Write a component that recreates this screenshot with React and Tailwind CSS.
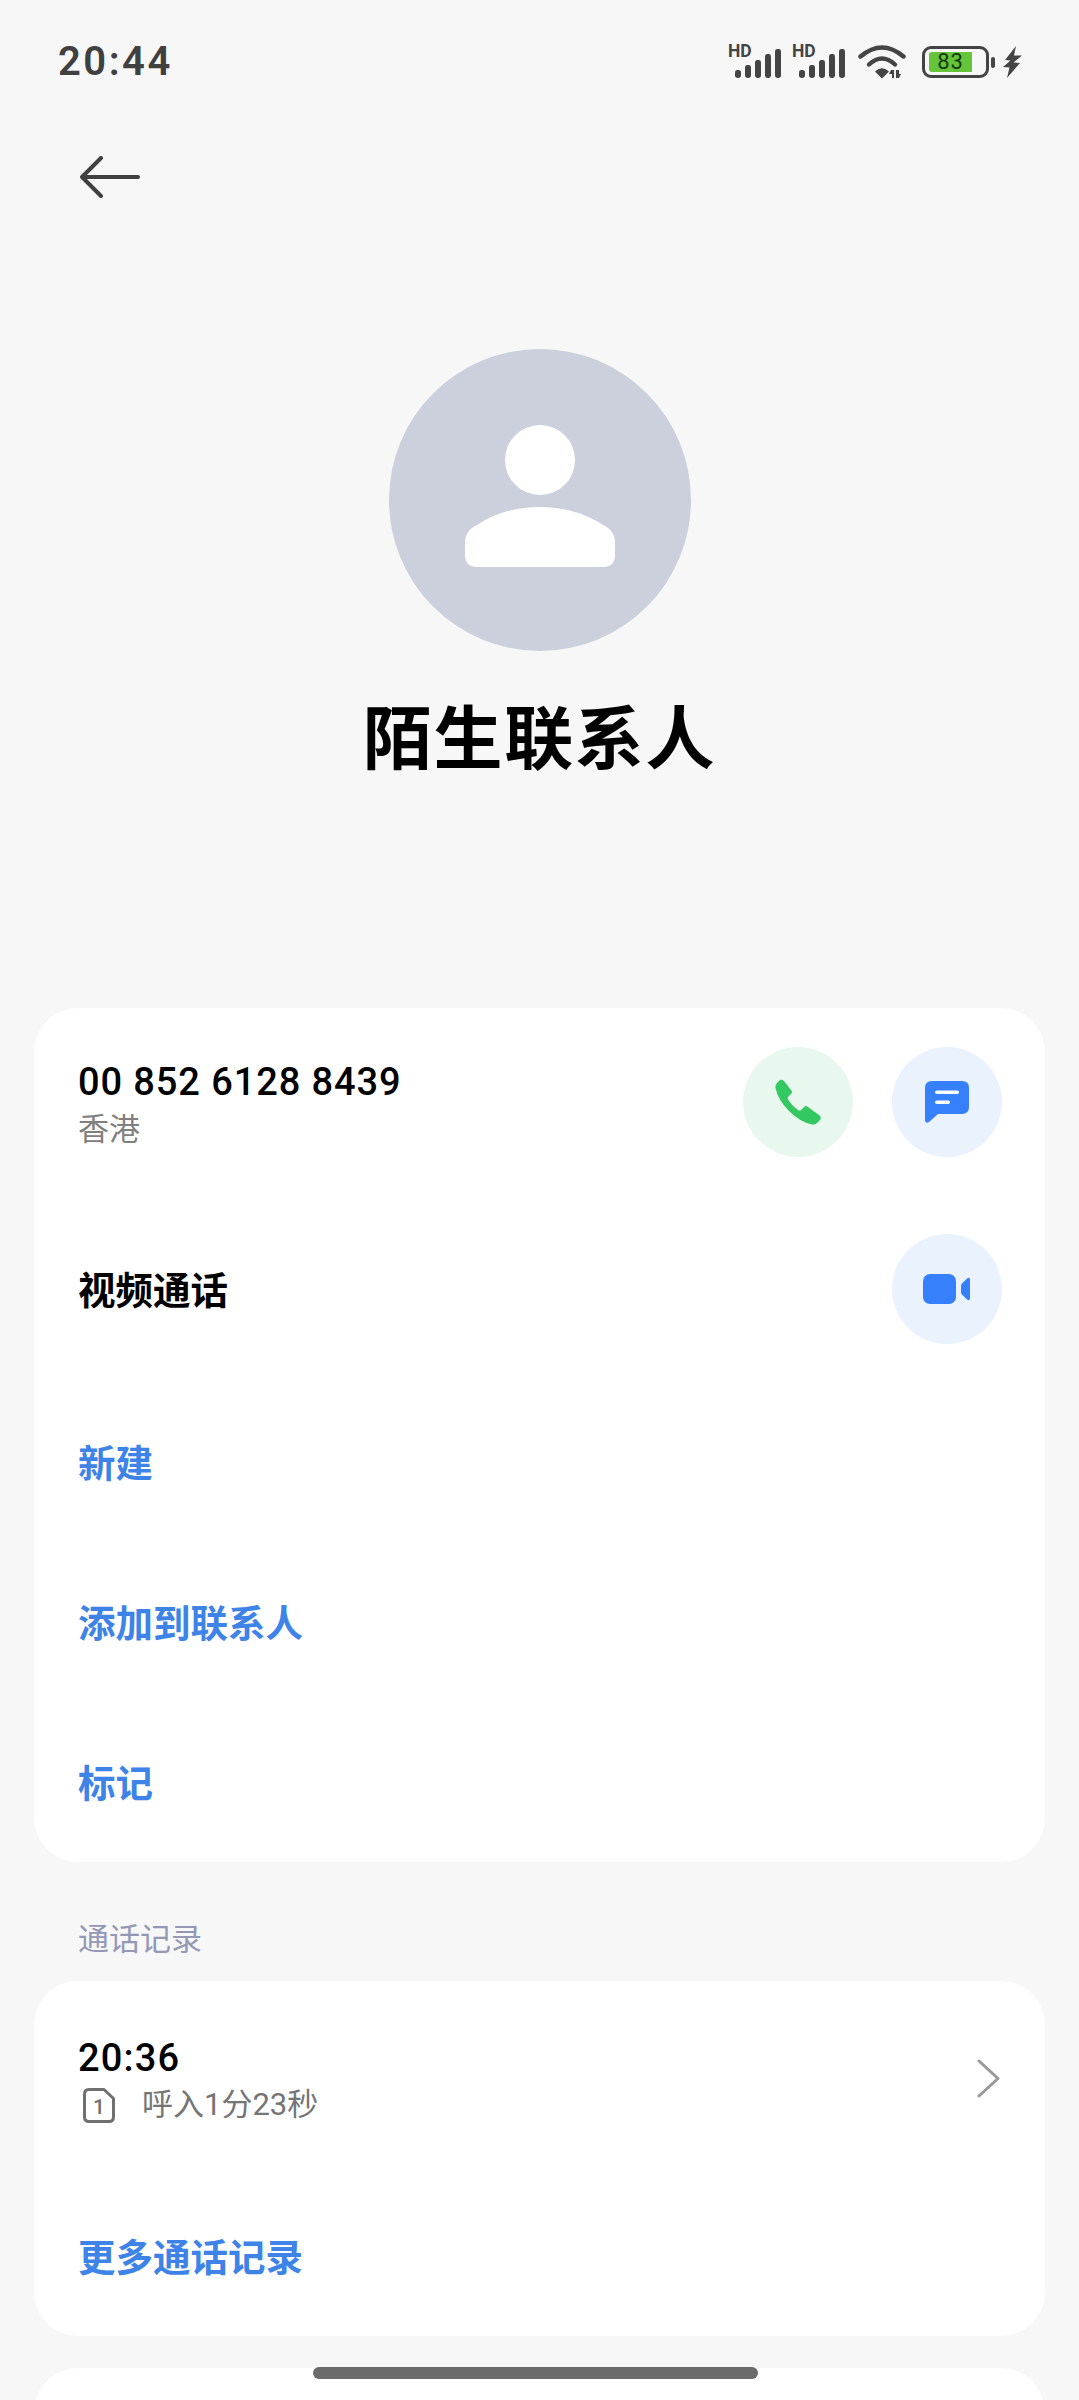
const FONT = "font-['Roboto','Noto_Sans_CJK_SC',sans-serif]";

function Signal() {
  const bars = [[7, 8], [17, 13], [27, 18], [37, 24], [47, 29]];
  return (
    <svg width="54" height="46" viewBox="0 -6 54 46" className="block">
      <text x="0" y="12" fontSize="17.5" fontWeight="700" fill="#444" fontFamily="Roboto, sans-serif">HD</text>
      {bars.map(([x, h]) => (
        <rect key={x} x={x} y={33 - h} width="6" height={h} rx="2.4" fill="#444" />
      ))}
    </svg>
  );
}

function Wifi() {
  return (
    <svg width="50" height="36" viewBox="0 0 50 36" className="block">
      <g fill="none" stroke="#444" strokeWidth="4.4" strokeLinecap="round">
        <path d="M2.5 12.5 Q24 -5.5 45.5 12.5" />
        <path d="M11 20.5 Q24 8.5 37 20.5" />
      </g>
      <path d="M18 27.5 Q24 22.5 30 27.5 L24 33.5 Z" fill="#444" stroke="#444" strokeWidth="1.5" strokeLinejoin="round" />
      <path d="M33 26 h3 v8 h-2 v-4 h-3 Z M38 34 h3 l2 -4 h-2 v-4 h-3 Z" fill="#444" />
    </svg>
  );
}

function Battery() {
  return (
    <div className="flex items-center">
      <div className="w-[67px] h-[32px] rounded-[9px] border-[3px] border-[#444] py-[3px] pl-[4px] flex">
        <div className="w-[43px] h-full rounded-l-[3px] bg-[#66c43a] flex items-center justify-center text-[22px] leading-none tracking-[1px] text-[#14390c] font-['Roboto',sans-serif]">
          83
        </div>
      </div>
      <div className="ml-[2px] w-[4px] h-[11px] rounded-[2px] bg-[#444]" />
    </div>
  );
}

function Bolt() {
  return (
    <svg width="19" height="32" viewBox="0 0 19 32" className="block">
      <path d="M13 0 L2 14 L7.5 14.5 L0 21 L6.5 21.5 L4 32 L17 17 L10.5 16.5 L19 9.5 L11 9.5 Z" fill="#444" />
    </svg>
  );
}

function Avatar() {
  return (
    <div className="w-[302px] h-[302px] rounded-full bg-[#cccfdc] flex flex-col items-center pt-[76px]">
      <div className="w-[70px] h-[70px] rounded-full bg-white" />
      <svg width="150" height="60" viewBox="0 0 150 60" className="block mt-[12px]">
        <path d="M0 36 C0 27 4 22 12 18 C30 6 52 0 75 0 C98 0 120 6 138 18 C146 22 150 27 150 36 V48 Q150 60 138 60 H12 Q0 60 0 48 Z" fill="#fff" />
      </svg>
    </div>
  );
}

function PhoneIcon() {
  return (
    <svg width="46" height="46" viewBox="0 0 46 46" className="block">
      <path
        d="M5 1 Q7 0 9 2 L16 11 Q18 13 16 15 L13 18 Q12 19 14 22 Q18 28 23 31 Q25 32 26 31 L29 28 Q31 26 33 28 L44 36 Q47 38 45 41 L42 44 Q40 46 37 45.5 Q25 43 14 32 Q3 21 0.5 9 Q0 6 2 4 Z"
        fill="#34c862"
      />
    </svg>
  );
}

function MessageIcon() {
  return (
    <svg width="44" height="42" viewBox="0 0 44 42" className="block">
      <path
        d="M7 0 H37 Q44 0 44 7 V26 Q44 33 37 33 H13 L4 41 Q0 43 0 39 V7 Q0 0 7 0 Z"
        fill="#3780fb"
      />
      <rect x="10" y="9.5" width="24" height="3.6" rx="1.8" fill="#fff" />
      <rect x="10" y="19.5" width="15" height="3.6" rx="1.8" fill="#fff" />
    </svg>
  );
}

function VideoIcon() {
  return (
    <svg width="48" height="30" viewBox="0 0 48 30" className="block">
      <rect x="0" y="0" width="33" height="30" rx="7" fill="#3780fb" />
      <path d="M38 12 Q38 10.5 39 9.5 L44 4.5 Q47 2.5 47 6 V24 Q47 27.5 44 25.5 L39 20.5 Q38 19.5 38 18 Z" fill="#3780fb" />
    </svg>
  );
}

function SimIcon() {
  return (
    <div className="relative w-[32px] h-[35px] shrink-0">
      <svg width="32" height="35" viewBox="0 0 32 35" className="block">
        <path
          d="M6 1.5 H21 L30.5 10.5 V29 Q30.5 33.5 26 33.5 H6 Q1.5 33.5 1.5 29 V6 Q1.5 1.5 6 1.5 Z"
          fill="none"
          stroke="#707070"
          strokeWidth="3"
          strokeLinejoin="round"
        />
        <text x="16" y="26" textAnchor="middle" fontSize="21" fontWeight="500" fill="#707070" fontFamily="Roboto, sans-serif">1</text>
      </svg>
    </div>
  );
}

function Circle({ tint, children }) {
  return (
    <div className={`w-[110px] h-[110px] rounded-full flex items-center justify-center shrink-0 ${tint}`}>
      {children}
    </div>
  );
}

function LinkRow({ children }) {
  return (
    <div className="h-[160px] pt-[2px] flex items-center text-[37.5px] leading-none font-semibold text-[#3d83e8]">
      {children}
    </div>
  );
}

export default function App() {
  return (
    <div className={`relative h-[2400px] overflow-hidden bg-[#f7f7f7] ${FONT}`}>
      <div className="h-[124px] flex items-center justify-between pl-[58px] pr-[57px]">
        <div className="text-[40px] leading-none font-semibold tracking-[2.5px] text-[#404040]">20:44</div>
        <div className="flex items-center">
          <Signal />
          <div className="w-[10px]" />
          <Signal />
          <div className="w-[12px]" />
          <Wifi />
          <div className="w-[14px]" />
          <Battery />
          <div className="w-[8px]" />
          <Bolt />
        </div>
      </div>

      <div className="pl-[80px] pt-[32px]">
        <svg width="60" height="42" viewBox="0 0 60 42" className="block">
          <path d="M58 21 H2 M21 2 L2 21 L21 40" fill="none" stroke="#404040" strokeWidth="4" strokeLinecap="round" strokeLinejoin="round" />
        </svg>
      </div>

      <div className="flex flex-col items-center mt-[151px]">
        <Avatar />
        <div className="mt-[48px] text-[69px] leading-[84px] font-bold text-black tracking-[1.6px]">陌生联系人</div>
      </div>

      <div className="mx-[34px] mt-[225px] h-[854px] rounded-[44px] bg-white pl-[44px] pr-[43px] pt-[39px]">
        <div className="flex items-center justify-between h-[110px]">
          <div className="pt-[6px]">
            <div className="text-[38px] leading-[44px] font-medium text-black tracking-[0.9px]">00 852 6128 8439</div>
            <div className="text-[31px] leading-[40px] text-[#808080] mt-[6px]">香港</div>
          </div>
          <div className="flex gap-[39px]">
            <Circle tint="bg-[#e9f8ef]"><PhoneIcon /></Circle>
            <Circle tint="bg-[#e9f2fd]"><MessageIcon /></Circle>
          </div>
        </div>
        <div className="flex items-center justify-between h-[110px] mt-[77px] mb-[40px]">
          <div className="pt-[6px] text-[37.5px] leading-none font-semibold text-black">视频通话</div>
          <Circle tint="bg-[#e9f2fd]"><VideoIcon /></Circle>
        </div>
        <LinkRow>新建</LinkRow>
        <LinkRow>添加到联系人</LinkRow>
        <LinkRow>标记</LinkRow>
      </div>

      <div className="pl-[78px] pt-[36px] h-[119px] flex items-center text-[31px] leading-none text-[#9498b6]">通话记录</div>

      <div className="mx-[34px] h-[355px] rounded-[44px] bg-white pl-[44px] pr-[45px]">
        <div className="flex items-center justify-between pt-[55px]">
          <div>
            <div className="text-[38px] leading-[44px] font-medium tracking-[1.2px] text-black">20:36</div>
            <div className="flex items-center gap-[27px] pl-[5px] text-[31px] leading-[40px] text-[#757575] mt-[5px]">
              <SimIcon />
              <span>呼入1分23秒</span>
            </div>
          </div>
          <svg width="23" height="39" viewBox="0 0 23 39" className="block mb-[4px]">
            <path d="M2 2 L21 19.5 L2 37" fill="none" stroke="#999" strokeWidth="3" strokeLinecap="round" strokeLinejoin="round" />
          </svg>
        </div>
        <div className="mt-[115px] text-[37.5px] leading-none font-semibold text-[#3d83e8]">更多通话记录</div>
      </div>

      <div className="mx-[34px] mt-[32px] h-[100px] rounded-t-[44px] bg-white" />

      <div className="absolute left-[313px] top-[2367px] w-[445px] h-[12px] rounded-full bg-[#6b6b6b]" />
    </div>
  );
}
